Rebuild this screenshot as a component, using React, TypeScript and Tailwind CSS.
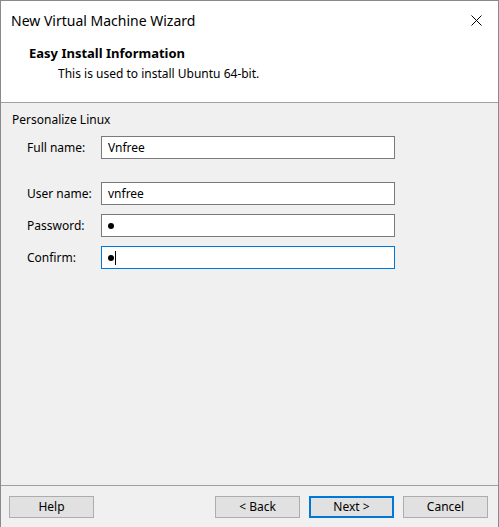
import React from 'react';

const font = { fontFamily: '"Segoe UI", "Noto Sans", Arial, sans-serif' };

function Field({ label, children, focused = false, className = '' }: { label: string; children: React.ReactNode; focused?: boolean; className?: string }) {
  return (
    <div className={`flex items-center h-[23px] ${className}`}>
      <div className="w-[74px] pl-[26px] text-[12px] text-black whitespace-nowrap box-content">{label}</div>
      <div
        className={`w-[294px] h-[23px] bg-white flex items-center pl-[6px] text-[12px] text-black border ${
          focused ? 'border-[#0078d7]' : 'border-[#7a7a7a]'
        }`}
      >
        {children}
      </div>
    </div>
  );
}

function Dot() {
  return <span className="inline-block w-[6px] h-[6px] rounded-full bg-black" />;
}

function Button({ label, primary = false, className = '' }: { label: string; primary?: boolean; className?: string }) {
  return (
    <div
      className={`w-[85px] h-[22px] flex items-center justify-center bg-[#e1e1e1] text-[12px] text-black ${
        primary ? 'border-2 border-[#0078d7]' : 'border border-[#adadad]'
      } ${className}`}
    >
      {label}
    </div>
  );
}

export default function App() {
  return (
    <div style={font} className="w-[499px] h-[527px] flex flex-col border-l border-r border-t border-[#8a8a8a] bg-[#f0f0f0] overflow-hidden">
      {/* Title + header */}
      <div className="bg-white h-[102px] border-b border-[#a0a0a0] shrink-0">
        <div className="h-[39px] flex items-center justify-between pl-[10px] pr-[15px]">
          <span className="text-[14px] text-black">New Virtual Machine Wizard</span>
          <svg width="11" height="11" viewBox="0 0 11 11" className="mr-[1px]">
            <path d="M0.5 0.5 L10.5 10.5 M10.5 0.5 L0.5 10.5" stroke="#000" strokeWidth="1" />
          </svg>
        </div>
        <div className="pl-[28px] pt-[5px] text-[13px] font-bold text-black leading-[16px]">Easy Install Information</div>
        <div className="pl-[57px] pt-[5px] text-[12px] text-black leading-[16px]">This is used to install Ubuntu 64-bit.</div>
      </div>

      {/* Body */}
      <div className="flex-1 flex flex-col">
        <div className="pl-[11px] pt-[9px] text-[12px] text-black leading-[16px]">Personalize Linux</div>
        <div className="flex flex-col mt-[8px]">
          <Field label="Full name:">Vnfree</Field>
          <Field label="User name:" className="mt-[23px]">vnfree</Field>
          <Field label="Password:" className="mt-[9px]">
            <Dot />
          </Field>
          <Field label="Confirm:" focused className="mt-[9px]">
            <Dot />
            <span className="inline-block w-[1px] h-[14px] bg-black ml-[1px]" />
          </Field>
        </div>
      </div>

      {/* Footer */}
      <div className="h-[42px] border-t border-[#a0a0a0] shrink-0 flex items-start pt-[10px] pl-[8px] pr-[10px]">
        <Button label="Help" />
        <div className="flex-1" />
        <Button label="< Back" />
        <Button label="Next >" primary className="ml-[9px]" />
        <Button label="Cancel" className="ml-[9px]" />
      </div>
    </div>
  );
}
